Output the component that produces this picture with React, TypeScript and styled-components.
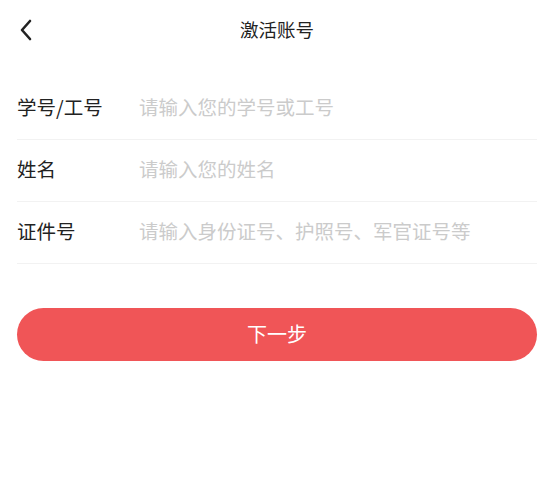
import React from "react";
import styled, { createGlobalStyle } from "styled-components";

const GlobalStyle = createGlobalStyle`
  html, body {
    margin: 0;
    padding: 0;
    background: #ffffff;
  }
  body {
    font-family: "Noto Sans CJK SC", "Noto Sans", sans-serif;
    color: #222222;
  }
  input::placeholder {
    color: #cbcbcb;
  }
`;

const Page = styled.div`
  width: 554px;
  min-height: 503px;
  background: #ffffff;
`;

const Header = styled.header`
  position: relative;
  height: 60px;
  display: flex;
  align-items: center;
  justify-content: center;
`;

const BackButton = styled.button`
  position: absolute;
  left: 12px;
  top: 16px;
  width: 28px;
  height: 28px;
  padding: 0;
  border: none;
  background: none;
  display: flex;
  align-items: center;
  justify-content: center;
`;

const Title = styled.h1`
  margin: 0 0 2px;
  font-size: 18.5px;
  font-weight: 400;
  color: #222222;
`;

const Form = styled.form`
  margin-top: 18px;
  padding: 0 17px;
`;

const Row = styled.label`
  height: 62px;
  box-sizing: border-box;
  padding-bottom: 4px;
  display: flex;
  align-items: center;
  border-bottom: 1px solid #f2f2f2;
`;

const Label = styled.span`
  width: 122px;
  flex-shrink: 0;
  font-size: 19.5px;
  color: #222222;
`;

const Input = styled.input`
  flex: 1;
  min-width: 0;
  border: none;
  outline: none;
  padding: 0;
  font-family: inherit;
  font-size: 19.5px;
  color: #222222;
  background: transparent;
`;

const NextButton = styled.button`
  display: block;
  width: 100%;
  height: 53px;
  margin-top: 44px;
  padding: 0 0 2px;
  border: none;
  border-radius: 27px;
  background: #f05557;
  color: #ffffff;
  font-family: inherit;
  font-size: 20px;
`;

const fields = [
  { label: "学号/工号", placeholder: "请输入您的学号或工号" },
  { label: "姓名", placeholder: "请输入您的姓名" },
  { label: "证件号", placeholder: "请输入身份证号、护照号、军官证号等" },
];

function App() {
  return (
    <Page>
      <GlobalStyle />
      <Header>
        <BackButton type="button" aria-label="返回">
          <svg width="14" height="22" viewBox="0 0 14 22" fill="none">
            <path
              d="M11 2 L3 11 L11 20"
              stroke="#222"
              strokeWidth="2.6"
              strokeLinecap="round"
              strokeLinejoin="round"
            />
          </svg>
        </BackButton>
        <Title>激活账号</Title>
      </Header>
      <Form onSubmit={(e) => e.preventDefault()}>
        {fields.map((f) => (
          <Row key={f.label}>
            <Label>{f.label}</Label>
            <Input placeholder={f.placeholder} />
          </Row>
        ))}
        <NextButton type="submit">下一步</NextButton>
      </Form>
    </Page>
  );
}

export default App;
